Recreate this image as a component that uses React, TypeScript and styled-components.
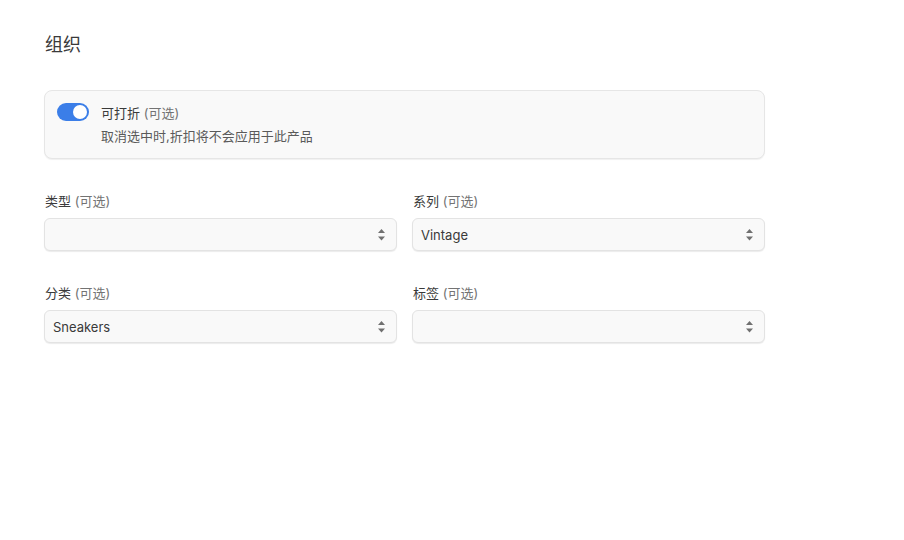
import React from "react";
import styled, { createGlobalStyle } from "styled-components";

const Global = createGlobalStyle`
  html, body { margin: 0; padding: 0; background: #ffffff; }
  body { font-family: Inter, "Noto Sans CJK SC", "Noto Sans", sans-serif; color: #3a3a3a; }
  * { box-sizing: border-box; }
`;

const Page = styled.div`
  width: 904px;
  min-height: 540px;
  padding: 34px 0 0 44px;
`;

const Section = styled.div`
  width: 721px;
  display: flex;
  flex-direction: column;
`;

const Title = styled.h2`
  margin: 0 0 34px 1px;
  font-size: 18px;
  line-height: 22px;
  font-weight: 400;
  color: #3a3a3a;
`;

const Card = styled.div`
  display: flex;
  gap: 12px;
  padding: 11px 12px;
  background: #f9f9f9;
  border: 1px solid #e6e6e6;
  border-radius: 8px;
  box-shadow: 0 1px 1px rgba(0, 0, 0, 0.06);
  margin-bottom: 32px;
`;

const Toggle = styled.span<{ $on: boolean }>`
  position: relative;
  flex: none;
  width: 32px;
  height: 18px;
  margin-top: 1px;
  border-radius: 9px;
  background: ${(p) => (p.$on ? "#3b7ee8" : "#cfcfcf")};
  &::after {
    content: "";
    position: absolute;
    top: 2px;
    left: ${(p) => (p.$on ? "16px" : "2px")};
    width: 14px;
    height: 14px;
    border-radius: 50%;
    background: #ffffff;
  }
`;

const CardText = styled.div`
  display: flex;
  flex-direction: column;
  gap: 1px;
`;

const Line = styled.div<{ $muted?: boolean }>`
  font-size: 13px;
  line-height: 22px;
  color: ${(p) => (p.$muted ? "#5a5a5a" : "#3a3a3a")};
`;

const Optional = styled.span`
  color: #737373;
`;

const Grid = styled.div`
  display: grid;
  grid-template-columns: 1fr 1fr;
  column-gap: 15px;
  row-gap: 32px;
`;

const Field = styled.div`
  display: flex;
  flex-direction: column;
  gap: 7px;
`;

const Label = styled.label`
  font-size: 13px;
  line-height: 20px;
  color: #3a3a3a;
  padding-left: 1px;
`;

const SelectBox = styled.div`
  height: 33px;
  display: flex;
  align-items: center;
  justify-content: space-between;
  padding: 0 10px 0 8px;
  background: #f9f9f9;
  border: 1px solid #e3e3e3;
  border-radius: 6px;
  box-shadow: 0 1px 1px rgba(0, 0, 0, 0.08);
  font-size: 13px;
  color: #3a3a3a;
`;

const Arrows = () => (
  <svg width="9" height="14" viewBox="0 0 9 14" aria-hidden>
    <path d="M4.5 1 L8 5 L1 5 Z" fill="#707070" />
    <path d="M1 8.5 L8 8.5 L4.5 12.5 Z" fill="#707070" />
  </svg>
);

const Select = ({ value }: { value?: string }) => (
  <SelectBox>
    <span>{value ?? ""}</span>
    <Arrows />
  </SelectBox>
);

const fields = [
  { label: "类型", value: "" },
  { label: "系列", value: "Vintage" },
  { label: "分类", value: "Sneakers" },
  { label: "标签", value: "" },
];

export default function App() {
  return (
    <Page>
      <Global />
      <Section>
        <Title>组织</Title>
        <Card>
          <Toggle $on />
          <CardText>
            <Line>
              可打折 <Optional>(可选)</Optional>
            </Line>
            <Line $muted>取消选中时,折扣将不会应用于此产品</Line>
          </CardText>
        </Card>
        <Grid>
          {fields.map((f) => (
            <Field key={f.label}>
              <Label>
                {f.label} <Optional>(可选)</Optional>
              </Label>
              <Select value={f.value} />
            </Field>
          ))}
        </Grid>
      </Section>
    </Page>
  );
}
